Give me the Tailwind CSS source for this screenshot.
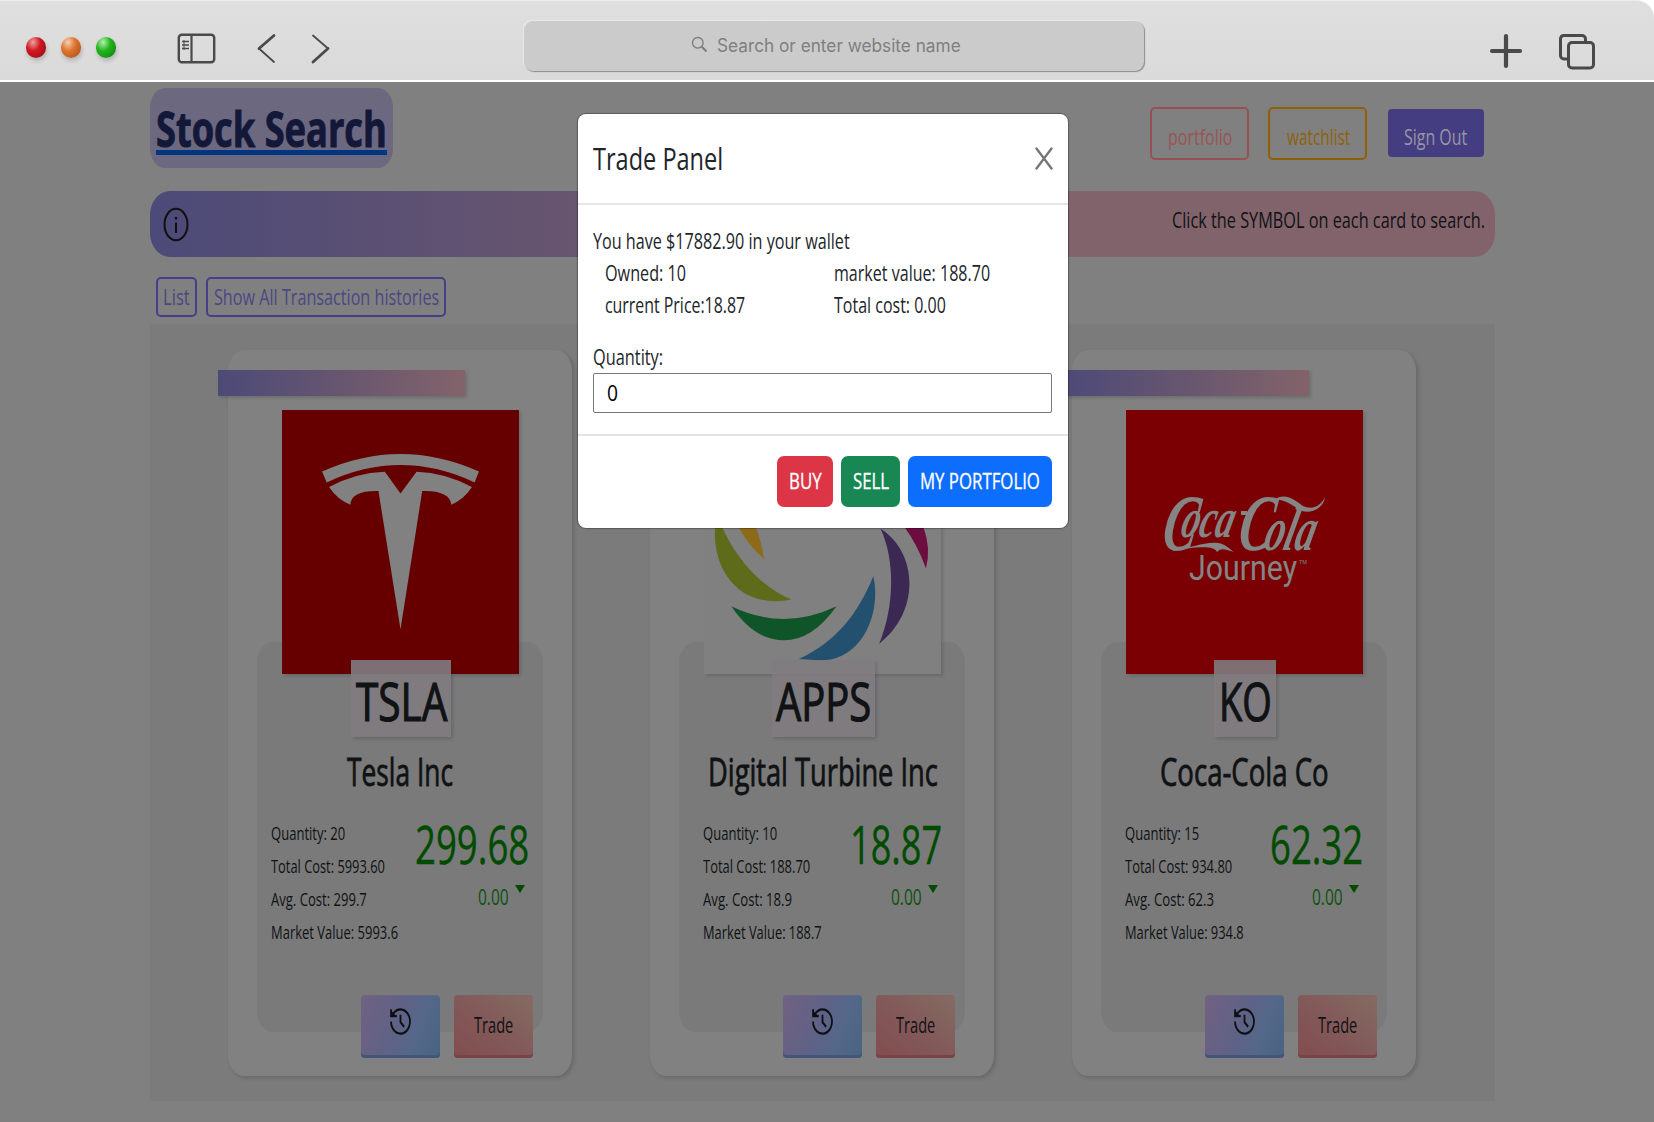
<!DOCTYPE html>
<html lang="en">
<head>
<meta charset="utf-8">
<title>Stock Search</title>
<script src="https://cdn.jsdelivr.net/npm/@tailwindcss/browser@4"></script>
</head>
<body class="w-[1654px] h-[1122px] overflow-hidden bg-[#808080] font-['Open_Sans','Noto_Sans',sans-serif] text-[21px] leading-[32px] text-[#101214]">

<!-- browser toolbar -->
<header class="h-[82px] bg-white">
  <div class="flex items-start h-[80px] rounded-tr-[18px] border-t border-[#ececec] bg-linear-to-b from-[#dfdfdf] to-[#dadada] pl-[26px]">
    <div class="flex gap-[15px] mt-[36px]">
      <span class="w-5 h-[21px] rounded-full bg-radial-[at_35%_25%] from-[#f0a0a0] via-[#cf1720] via-40% to-[#8c0d14] shadow-[1px_3px_4px_rgba(0,0,0,.18)]"></span>
      <span class="w-5 h-[21px] rounded-full bg-radial-[at_35%_25%] from-[#f6cfae] via-[#dd7430] via-40% to-[#a34c15] shadow-[1px_3px_4px_rgba(0,0,0,.18)]"></span>
      <span class="w-5 h-[21px] rounded-full bg-radial-[at_35%_25%] from-[#b5f0ae] via-[#22b41c] via-40% to-[#12780e] shadow-[1px_3px_4px_rgba(0,0,0,.18)]"></span>
    </div>
    <svg class="ml-[61px] mt-[32px]" width="39" height="31" viewBox="0 0 39 31" fill="none" stroke="#4a4a4a">
      <rect x="1.8" y="1.8" width="35.4" height="27.4" rx="3" stroke-width="2.4"/>
      <path d="M14.500 2v27" stroke-width="2.200"/><path d="M5 8.500h7M5 12h7M5 15.500h7" stroke-width="1.500"/><path d="M7 7v10" stroke-width="1"/>
    </svg>
    <svg class="ml-[41px] mt-[32px]" width="19" height="31" viewBox="0 0 19 31" fill="none" stroke="#4a4a4a" stroke-linecap="round"><path d="M2 15.500L17 2.500" stroke-width="2.800"/><path d="M2 15.500L17 29" stroke-width="1.800"/></svg>
    <svg class="ml-[35px] mt-[32px]" width="19" height="31" viewBox="0 0 19 31" fill="none" stroke="#4a4a4a" stroke-linecap="round"><path d="M2 2.500L17 15.500" stroke-width="1.800"/><path d="M17 15.500L2 29" stroke-width="2.800"/></svg>
    <div class="ml-[194px] mt-[20px] flex items-center w-[620px] h-[50px] rounded-[9px] bg-[#cbcbcb] shadow-[1px_1px_1px_#8c8c8c,-1px_-1px_1px_#e8e8e8] pl-[167px] pb-[1px]">
      <svg class="-mt-[2px]" width="17" height="17" viewBox="0 0 17 17" fill="none" stroke="#7c7c7c"><circle cx="6.8" cy="6.8" r="5.3" stroke-width="1.3"/><path d="M10.8 10.8L15.5 15.5" stroke-width="2"/></svg>
      <span data-w="244" class="ml-[9px] inline-block origin-left whitespace-nowrap font-[Inter,sans-serif] text-[18px] text-[#7f7f7f]">Search or enter website name</span>
    </div>
    <svg class="ml-[345px] mt-[32px]" width="34" height="36" viewBox="0 0 34 36" stroke="#4a4a4a" stroke-width="4.2" stroke-linecap="round"><path d="M17 3v30M3 18h28"/></svg>
    <svg class="ml-[35px] mt-[32px]" width="37" height="37" viewBox="0 0 37 37" fill="none" stroke="#4a4a4a" stroke-width="3"><path d="M9 26H6a3.500 3.500 0 0 1-3.500-3.500V5.500A3.500 3.500 0 0 1 6 2.500h18a3.500 3.500 0 0 1 3.500 3.500v3"/><rect x="10.500" y="9.500" width="25" height="25.500" rx="3.500"/></svg>
  </div>
</header>

<main class="ml-[150px] w-[1345px]">
  <div class="flex h-[109px] pt-[6px]">
    <div class="w-[243px] h-[80px] rounded-[15px/20px] bg-[#6b6880] px-[6px] pt-[17px]">
      <div class="w-[231px] h-[50px] border-b-5 border-[#003580]"><span data-w="231" class="inline-block origin-left whitespace-nowrap text-[48px] leading-[48px] font-bold text-[#131839] [-webkit-text-stroke:1px_#131839]">Stock Search</span></div>
    </div>
    <div class="ml-[757px] mt-[19px] w-[99px] h-[53px] rounded-[5px] border-2 border-[#985050] text-[#9a5454] pl-[16px] pt-[12px]"><span data-w="64" class="inline-block origin-left whitespace-nowrap">portfolio</span></div>
    <div class="ml-[19px] mt-[19px] w-[99px] h-[53px] rounded-[5px] border-2 border-[#8f5f05] text-[#8f610c] pl-[17px] pt-[12px]"><span data-w="63" class="inline-block origin-left whitespace-nowrap">watchlist</span></div>
    <div class="ml-[21px] mt-[21px] w-[96px] h-[48px] rounded-[4px] bg-[#443d81] text-[#9896a6] pl-[16px] pt-[12px]"><span data-w="63" class="inline-block origin-left whitespace-nowrap">Sign Out</span></div>
  </div>

  <div class="flex justify-between h-[66px] rounded-[20px/24px] bg-[linear-gradient(90deg,#4c4a78_0%,#67556f_31%,#80636b_65%,#83636b_100%)] pl-[13px] pr-[10px]">
    <svg class="mt-[16px]" width="26" height="35" viewBox="0 0 26 35" fill="none" stroke="#101014"><ellipse cx="13" cy="17.500" rx="11.500" ry="15.800" stroke-width="2"/><path d="M13 15.500v10.500" stroke-width="2"/><path d="M13 10v2.500" stroke-width="2.200"/></svg>
    <span data-w="313" class="mt-[13px] inline-block origin-left whitespace-nowrap">Click the SYMBOL on each card to search.</span>
  </div>

  <div class="flex h-[67px] pt-[20px] pl-[6px] gap-[9px] text-[#4b4783]">
    <div class="w-[41px] h-[40px] rounded-[5px] border-2 border-[#443f87] pl-[5px] pt-[2px]"><span data-w="27" class="inline-block origin-left whitespace-nowrap">List</span></div>
    <div class="w-[240px] h-[40px] rounded-[5px] border-2 border-[#443f87] pl-[6px] pt-[2px]"><span data-w="225" class="inline-block origin-left whitespace-nowrap">Show All Transaction histories</span></div>
  </div>

  <section id="cards" class="flex gap-[78px] h-[777px] bg-[#7b7b7b] pl-[78.400px] pt-[26px]"></section>
</main>

<!-- trade dialog -->
<div class="absolute left-[578px] top-[114px] w-[490px] h-[414px] rounded-[8px] bg-white text-[#212529] shadow-[0_0_1px_1px_rgba(0,0,0,.3)]">
  <div class="flex justify-between h-[91px] border-b-2 border-[#e3e6ec] px-[15px]">
    <span data-w="130" class="mt-[24px] inline-block origin-left whitespace-nowrap text-[31.500px] leading-[40px]">Trade Panel</span>
    <svg class="mt-[33px]" width="18" height="23" viewBox="0 0 18 23" stroke="#757575" stroke-width="2.300" stroke-linecap="round"><path d="M1.500 1.500L16.500 21.500M16.500 1.500L1.500 21.500"/></svg>
  </div>
  <div class="h-[231px] border-b-2 border-[#e0e4ea] px-[15px] pt-[20px]">
    <div class="h-[32px]"><span data-w="257" class="inline-block origin-left whitespace-nowrap">You have $17882.90 in your wallet</span></div>
    <div class="grid grid-cols-[229px_1fr] pl-[12px]">
      <div class="h-[32px]"><span data-w="81" class="inline-block origin-left whitespace-nowrap">Owned: 10</span></div>
      <div class="h-[32px]"><span data-w="156" class="inline-block origin-left whitespace-nowrap">market value: 188.70</span></div>
      <div class="h-[32px]"><span data-w="140" class="inline-block origin-left whitespace-nowrap">current Price:18.87</span></div>
      <div class="h-[32px]"><span data-w="112" class="inline-block origin-left whitespace-nowrap">Total cost: 0.00</span></div>
    </div>
    <div class="mt-[20px] h-[32px]"><span data-w="70" class="inline-block origin-left whitespace-nowrap">Quantity:</span></div>
    <div class="h-[40px] w-[459px] rounded-[2px] border-[1.500px] border-[#767676] pl-[13px] pt-[3px] text-black"><span data-w="11" class="inline-block origin-left whitespace-nowrap">0</span></div>
  </div>
  <div class="flex justify-end gap-[8px] pr-[16px] pt-[20px] text-white">
    <div class="w-[56px] h-[51px] rounded-[7px] bg-[#dc3545] pl-[12px] pt-[9px]"><span data-w="33" class="inline-block origin-left whitespace-nowrap [-webkit-text-stroke:.3px]">BUY</span></div>
    <div class="w-[59px] h-[51px] rounded-[7px] bg-[#198754] pl-[12px] pt-[9px]"><span data-w="36" class="inline-block origin-left whitespace-nowrap [-webkit-text-stroke:.3px]">SELL</span></div>
    <div class="w-[144px] h-[51px] rounded-[7px] bg-[#0d6efd] pl-[12px] pt-[9px]"><span data-w="120" class="inline-block origin-left whitespace-nowrap [-webkit-text-stroke:.3px]">MY PORTFOLIO</span></div>
  </div>
</div>

<script>
const teslaLogo = `<svg class="block w-full h-full bg-[#660000]" viewBox="0 0 710 791" preserveAspectRatio="none" fill="#818181">
  <path d="M120 184Q355 79 590 184L577 217Q355 113 134 217Z"/>
  <path d="M141 231Q220 188 308 185L355 250L403 185Q490 188 569 231Q545 268 507 284Q503 241 420 243L355 657L289 243Q207 241 205 284Q165 268 141 231Z"/></svg>`;
const appsLogo = `<svg class="block w-full h-full bg-[#808080]" viewBox="0 0 710 791" preserveAspectRatio="none">
  <path fill="#5d6b1b" d="M34 340C20 470 100 600 262 568C170 530 90 440 50 340Z"/>
  <path fill="#8b6b17" d="M103 350Q136 410 180 447Q172 395 155 350Z"/>
  <path fill="#10552a" d="M82 588Q239 664 397 588Q325 690 240 690Q150 690 82 588Z"/>
  <path fill="#24506f" d="M507 498C534 610 470 765 330 749L284 746C395 695 462 610 507 498Z"/>
  <path fill="#3b2954" d="M529 356C640 425 650 605 525 700C571 590 573 450 529 356Z"/>
  <path fill="#6c0c41" d="M600 350Q640 405 665 475Q681 415 657 350Z"/></svg>`;
const cokeLogo = `<svg class="block w-full h-full bg-[#7b0003]" viewBox="0 0 237 264" preserveAspectRatio="none" fill="#858585" font-family="Liberation Serif, serif" font-style="italic" font-weight="bold">
  <text transform="translate(34 140) skewX(-10)" font-size="80" textLength="34" lengthAdjust="spacingAndGlyphs">C</text>
  <text transform="translate(53 127) skewX(-14)" font-size="56" textLength="52" lengthAdjust="spacingAndGlyphs">oca</text>
  <rect x="115" y="101" width="6" height="4"/>
  <text transform="translate(110 140) skewX(-10)" font-size="80" textLength="34" lengthAdjust="spacingAndGlyphs">C</text>
  <text transform="translate(136 140) skewX(-14)" font-size="62" textLength="50" lengthAdjust="spacingAndGlyphs">ola</text>
  <path d="M44 138C62 141 76 131 92 133C100 134 103 139 108 142C100 140 96 137 91 142C88 135 68 137 48 141Z"/>
  <path d="M148 90C158 82 168 89 177 96C188 101 196 94 199 87C198 97 187 104 176 101C165 95 158 88 148 90Z"/>
  <text x="63" y="170" font-family="Roboto, sans-serif" font-style="normal" font-weight="400" font-size="35" textLength="108" lengthAdjust="spacingAndGlyphs">Journey</text>
  <text x="173" y="154" font-family="Roboto, sans-serif" font-style="normal" font-weight="400" font-size="6" textLength="8" lengthAdjust="spacingAndGlyphs">TM</text></svg>`;

const cards = [
  { logo: teslaLogo, sym: ['TSLA', 91, 100], name: ['Tesla Inc', 106], pad: [43, 43],
    stats: [['Quantity: 20', 74], ['Total Cost: 5993.60', 114], ['Avg. Cost: 299.7', 96], ['Market Value: 5993.6', 127]], price: ['299.68', 114] },
  { logo: appsLogo, sym: ['APPS', 95, 103], name: ['Digital Turbine Inc', 230], pad: [53, 52],
    stats: [['Quantity: 10', 74], ['Total Cost: 188.70', 107], ['Avg. Cost: 18.9', 89], ['Market Value: 188.7', 119]], price: ['18.87', 92] },
  { logo: cokeLogo, sym: ['KO', 53, 62], name: ['Coca-Cola Co', 169], pad: [53, 53],
    stats: [['Quantity: 15', 74], ['Total Cost: 934.80', 107], ['Avg. Cost: 62.3', 89], ['Market Value: 934.8', 119]], price: ['62.32', 93] },
];
const fit = (text, w) => `<span data-w="${w}" class="inline-block origin-left whitespace-nowrap">${text}</span>`;

document.getElementById('cards').innerHTML = cards.map(c => `
  <article class="relative w-[344px] h-[726px] shrink-0 rounded-[16px/21px] bg-[#818181] shadow-[2px_2px_4px_rgba(0,0,0,.16)] pt-[20px]">
    <div class="-ml-[10px] w-[247px] h-[26px] bg-[linear-gradient(90deg,#4c4a78,#67566f_50%,#83636a)] shadow-[2px_2px_3px_rgba(0,0,0,.14)]"></div>
    <div class="absolute left-[29px] top-[292px] w-[286px] h-[390px] rounded-[16px/21px] bg-[#7a7a7a]"></div>
    <div class="relative mt-[14px] ml-[54px] w-[237px] h-[264px] shadow-[2px_2px_3px_rgba(0,0,0,.14)]">${c.logo}</div>
    <div class="relative left-px -mt-[14px] mx-auto h-[77px] bg-[#807b80]/90 shadow-[2px_2px_3px_rgba(0,0,0,.14)] flex justify-center text-[53px] leading-[82px] [-webkit-text-stroke:1.2px]" style="width:${c.sym[2]}px">${fit(c.sym[0], c.sym[1])}</div>
    <div class="relative mt-[9px] h-[52px] flex justify-center text-[38px] leading-[50px] [-webkit-text-stroke:.8px]">${fit(c.name[0], c.name[1])}</div>
    <div class="relative mt-[18px] flex justify-between h-[179px]" style="padding:0 ${c.pad[1]}px 0 ${c.pad[0]}px">
      <div class="text-[18.500px] leading-[33px]">${c.stats.map(s => `<div class="h-[33px]">${fit(s[0], s[1])}</div>`).join('')}</div>
      <div class="flex flex-col items-end text-[#004b00]">
        <div class="flex justify-end h-[60px] text-[53px] leading-[55px] [-webkit-text-stroke:.4px]">${fit(c.price[0], c.price[1])}</div>
        <div class="flex justify-end pr-[4px] text-[#0b530b]"><span class="mt-[5px]">${fit('0.00', 31)}</span><svg class="ml-[7px] mt-[9px]" width="10" height="8" viewBox="0 0 10 8" fill="#004b00"><path d="M0 0h10L5 8z"/></svg></div>
      </div>
    </div>
    <div class="relative flex gap-[14px] ml-[133px]">
      <div class="w-[79px] h-[63px] rounded-[4px] bg-[linear-gradient(110deg,#716181,#5f6286_45%,#54688a_70%,#48637f)] shadow-[inset_0_-3px_0_#42557c,inset_0_1px_0_#7a6c8c66] pl-[29px] pt-[13px]">
        <svg width="21" height="27" viewBox="2 2 20 20" preserveAspectRatio="none" fill="none" stroke="#101014" stroke-width="1.700"><path d="M3 12a9 9 0 1 0 3-6.700L3.500 8"/><path d="M3 3v5h5.500"/><path d="M3.500 4.500v3.500h4z" fill="#101014" stroke-width=".6"/><path d="M12 7v5.500l3.500 3.500"/></svg>
      </div>
      <div class="w-[79px] h-[63px] rounded-[4px] bg-[linear-gradient(40deg,#834d4f,#825858_45%,#846c63)] shadow-[inset_0_-3px_0_#7c4347,inset_0_1px_0_#8a606066] pl-[20px] pt-[14px]">${fit('Trade', 39)}</div>
    </div>
  </article>`).join('');

function fitLabel(el) {
  const natural = el.offsetWidth, w = +el.dataset.w;
  if (!natural) return;
  el.style.transform = `scaleX(${w / natural})`;
  el.style.marginRight = `${w - natural}px`;
}
const labels = document.querySelectorAll('[data-w]');
const observer = new ResizeObserver(entries => entries.forEach(e => fitLabel(e.target)));
labels.forEach(el => { el.style.flexShrink = 0; fitLabel(el); observer.observe(el); });
window.addEventListener('load', () => labels.forEach(fitLabel));
</script>
</body>
</html>
